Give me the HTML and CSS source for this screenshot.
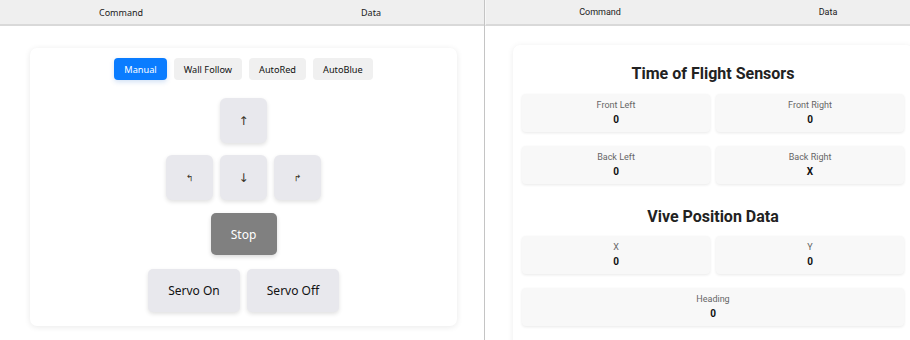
FILE: index.html
```html
<html>
<head>
<title>Robot Control</title>
<link rel="stylesheet" href="styles.css">
</head>
<body>
    <div class="screen">
        <div class="pane leftPane">
            <div class="tabBar leftTabs">
                <div class="tab">Command</div>
                <div class="tab">Data</div>
            </div>
            <div class="commandCard">
                <div class="modeRow">
                    <button type="button" class="modeButton active">Manual</button>
                    <button type="button" class="modeButton">Wall Follow</button>
                    <button type="button" class="modeButton">AutoRed</button>
                    <button type="button" class="modeButton">AutoBlue</button>
                </div>
                <div class="driveRow">
                    <button type="button" class="arrowButton">&#8593;</button>
                </div>
                <div class="driveRow">
                    <button type="button" class="arrowButton small">&#8624;</button>
                    <button type="button" class="arrowButton">&#8595;</button>
                    <button type="button" class="arrowButton small">&#8625;</button>
                </div>
                <div class="driveRow">
                    <button type="button" class="stopButton">Stop</button>
                </div>
                <div class="driveRow">
                    <button type="button" class="servoButton">Servo On</button>
                    <button type="button" class="servoButton">Servo Off</button>
                </div>
            </div>
        </div>

        <div class="pane rightPane">
            <div class="tabBar rightTabs">
                <div class="tab">Command</div>
                <div class="tab">Data</div>
            </div>
            <div class="dataCard">
                <h2>Time of Flight Sensors</h2>
                <div class="sensorGrid">
                    <div class="sensorBox"><span class="label">Front Left</span><span class="value">0</span></div>
                    <div class="sensorBox"><span class="label">Front Right</span><span class="value">0</span></div>
                    <div class="sensorBox"><span class="label">Back Left</span><span class="value">0</span></div>
                    <div class="sensorBox"><span class="label">Back Right</span><span class="value">X</span></div>
                </div>
                <h2 class="second">Vive Position Data</h2>
                <div class="sensorGrid">
                    <div class="sensorBox"><span class="label">X</span><span class="value">0</span></div>
                    <div class="sensorBox"><span class="label">Y</span><span class="value">0</span></div>
                    <div class="sensorBox wide"><span class="label">Heading</span><span class="value">0</span></div>
                </div>
            </div>
        </div>
    </div>
</body>
</html>
```

FILE: styles.css
```css
body {
    margin: 0;
    background-color: white;
    overflow: hidden;}
.screen {
    display: flex;
    width: 910px;
    height: 340px;}
.pane {
    overflow: hidden;
    height: 340px;}

/* tab bars */
.tabBar {
    display: grid;
    height: 24px;
    background-color: #efefef;
    border-bottom: 2px solid #d9d9d9;
    align-items: center;
    text-align: center;
    color: #1a1a1a;}

/* left side: command page */
.leftPane {
    width: 484px;
    flex: none;
    border-right: 1px solid #c4c4c4;
    font-family: "Noto Sans", sans-serif;}
.leftTabs {
    width: 500px;
    grid-template-columns: 242px 258px;
    font-size: 9px;}
.commandCard {
    margin: 22px 0 0 30px;
    width: 427px;
    height: 278px;
    box-sizing: border-box;
    padding-top: 10px;
    border-radius: 7px;
    background-color: white;
    box-shadow: 0 1px 6px rgba(0,0,0,0.09);
    display: flex;
    flex-direction: column;
    align-items: center;}
.modeRow {
    display: flex;
    gap: 7px;
    margin-bottom: 18px;}
button {
    border: none;
    font-family: "Noto Sans", sans-serif;
    color: #111;
    padding: 0;}
.modeButton {
    height: 22px;
    padding: 0 10px;
    border-radius: 4px;
    background-color: #f0f0f0;
    font-size: 9.2px;}
.modeButton.active {
    background-color: #0a7cff;
    color: white;
    box-shadow: 0 2px 5px rgba(0,90,200,0.18);}
.driveRow {
    display: flex;
    gap: 7px;
    margin-bottom: 12px;}
.arrowButton {
    width: 47px;
    height: 45px;
    border-radius: 6px;
    background-color: #e8e8ed;
    box-shadow: 0 2px 4px rgba(0,0,0,0.12);
    font-family: "DejaVu Sans", sans-serif;
    font-size: 12px;
    color: #3a3326;}
.arrowButton.small {font-size: 9px;}
.stopButton {
    width: 66px;
    height: 42px;
    margin-top: 1px;
    border-radius: 5px;
    background-color: #808080;
    color: white;
    font-size: 12px;
    box-shadow: 0 2px 4px rgba(0,0,0,0.15);}
.servoButton {
    height: 43px;
    width: 92px;
    margin-top: 2px;
    border-radius: 5px;
    background-color: #e8e8ed;
    font-size: 12px;
    box-shadow: 0 2px 4px rgba(0,0,0,0.12);}

/* right side: data page */
.rightPane {
    flex: 1;
    font-family: Roboto, sans-serif;}
.rightTabs {
    width: 456px;
    grid-template-columns: 228px 228px;
    font-size: 9px;
    border-left: 1px solid #f7f7f7;}
.dataCard {
    margin: 19px 0 0 28px;
    width: 400px;
    box-sizing: border-box;
    padding: 9px 9px 24px;
    border-radius: 7px;
    background-color: white;
    box-shadow: 0 1px 6px rgba(0,0,0,0.08);}
.dataCard h2 {
    margin: 10px 0 11px;
    font-size: 16px;
    line-height: 19px;
    text-align: center;
    color: #222;}
.dataCard h2.second {margin-top: 23px; margin-bottom: 10px;}
.sensorGrid {
    display: grid;
    grid-template-columns: 1fr 1fr;
    column-gap: 6px;
    row-gap: 14px;}
.sensorBox {
    height: 38px;
    box-sizing: border-box;
    padding-top: 6px;
    border-radius: 4px;
    background-color: #f8f8f8;
    box-shadow: 0 1px 3px rgba(0,0,0,0.09);
    display: flex;
    flex-direction: column;
    align-items: center;}
.sensorBox.wide {grid-column: span 2;}
.label {
    font-size: 9px;
    line-height: 11px;
    color: #666;}
.value {
    margin-top: 3px;
    font-size: 10px;
    line-height: 12px;
    font-weight: bold;
    color: #111;}
```
